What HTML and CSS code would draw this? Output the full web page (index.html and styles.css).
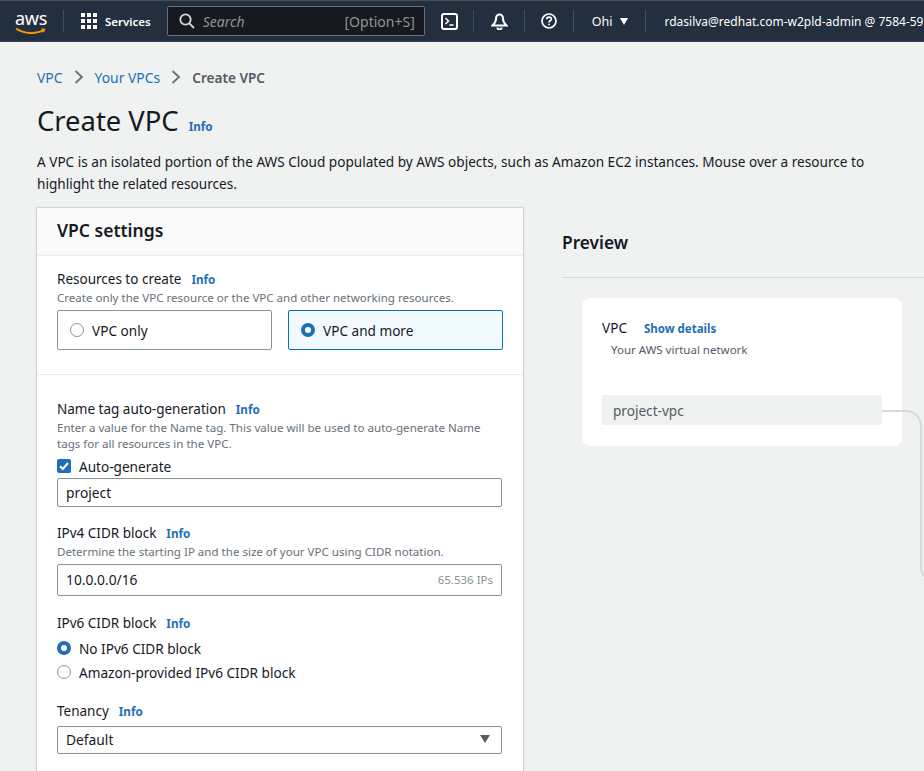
FILE: index.html
```html
<!DOCTYPE html>
<html lang="en">
<head>
    <meta charset="UTF-8">
    <title>Create VPC</title>
    <link rel="stylesheet" href="styles.css">
</head>
<body>

    <!-- Top navigation -->
    <header class="topnav">
        <div class="logo">
            <span class="logo-text">aws</span>
            <svg class="logo-smile" width="32" height="8" viewBox="0 0 32 8">
                <path d="M1 1.5C9 7 21 7.5 29 3" fill="none" stroke="#f90" stroke-width="1.8"/>
                <path d="M26 1.5l4.500 .2-1.600 4z" fill="#f90"/>
            </svg>
        </div>
        <span class="nav-div logo-div"></span>
        <svg class="grid-icon" width="16" height="16" viewBox="0 0 16 16" fill="#fff">
            <rect x="0" y="0" width="4" height="4"/><rect x="6" y="0" width="4" height="4"/><rect x="12" y="0" width="4" height="4"/>
            <rect x="0" y="6" width="4" height="4"/><rect x="6" y="6" width="4" height="4"/><rect x="12" y="6" width="4" height="4"/>
            <rect x="0" y="12" width="4" height="4"/><rect x="6" y="12" width="4" height="4"/><rect x="12" y="12" width="4" height="4"/>
        </svg>
        <span class="nav-services">Services</span>
        <div class="nav-search">
            <svg width="16" height="16" viewBox="0 0 16 16" fill="none" stroke="#d5dbdb" stroke-width="1.800">
                <circle cx="6.500" cy="6.500" r="5.200"/><path d="M10.300 10.300L15 15"/>
            </svg>
            <span class="search-text">Search</span>
            <span class="search-key">[Option+S]</span>
        </div>
        <svg class="shell-icon" width="17" height="17" viewBox="0 0 17 17" fill="none" stroke="#fff" stroke-width="2">
            <rect x="1" y="1" width="15" height="15" rx="2"/>
            <path d="M4.500 5l3 3-3 3M8.500 12h4" stroke-width="1.500"/>
        </svg>
        <span class="nav-div shell-div"></span>
        <svg class="bell-icon" width="17" height="17" viewBox="0 0 17 17" fill="none" stroke="#fff" stroke-width="2">
            <path d="M8.500 1.500C5.800 1.500 5 3.800 5 6c0 3-2 5-3.500 6.500h14C14 11 12 9 12 6c0-2.200-.8-4.500-3.500-4.500z"/>
            <path d="M6.500 14.500a2 2 0 0 0 4 0"/>
        </svg>
        <span class="nav-div bell-div"></span>
        <svg class="help-icon" width="16" height="16" viewBox="0 0 16 16" fill="none" stroke="#fff" stroke-width="1.700">
            <circle cx="8" cy="8" r="7"/>
            <path d="M5.700 6.200C5.800 4.800 6.800 4.200 8 4.200c1.300 0 2.300.8 2.300 1.900 0 1.700-2.300 1.700-2.300 3.500"/>
            <path d="M8 10.800v1.500"/>
        </svg>
        <span class="nav-div help-div"></span>
        <span class="nav-region">Ohi</span>
        <span class="nav-caret"></span>
        <span class="nav-div region-div"></span>
        <span class="nav-user">rdasilva@redhat.com-w2pld-admin @ 7584-59</span>
    </header>

    <main class="content">
        <nav class="crumbs">
            <a href="#">VPC</a>
            <svg width="10" height="14" viewBox="0 0 10 14" fill="none" stroke="#687078" stroke-width="1.800"><path d="M1.500 1l6.500 6-6.500 6"/></svg>
            <a href="#">Your VPCs</a>
            <svg width="10" height="14" viewBox="0 0 10 14" fill="none" stroke="#687078" stroke-width="1.800"><path d="M1.500 1l6.500 6-6.500 6"/></svg>
            <span class="crumb-current">Create VPC</span>
        </nav>

        <div class="title-row">
            <h1>Create VPC</h1>
            <a class="info" href="#">Info</a>
        </div>
        <p class="intro">A VPC is an isolated portion of the AWS Cloud populated by AWS objects, such as Amazon EC2 instances. Mouse over a resource to highlight the related resources.</p>

        <div class="columns">
            <!-- Settings form -->
            <section class="panel">
                <h2 class="panel-head">VPC settings</h2>

                <div class="panel-block first-block">
                    <div class="label-row"><span class="label">Resources to create</span><a class="info" href="#">Info</a></div>
                    <p class="hint">Create only the VPC resource or the VPC and other networking resources.</p>
                    <div class="tiles">
                        <div class="tile"><span class="radio"></span>VPC only</div>
                        <div class="tile tile-on"><span class="radio radio-on"></span>VPC and more</div>
                    </div>
                </div>

                <div class="panel-block second-block">
                    <div class="label-row"><span class="label">Name tag auto-generation</span><a class="info" href="#">Info</a></div>
                    <p class="hint">Enter a value for the Name tag. This value will be used to auto-generate Name tags for all resources in the VPC.</p>
                    <div class="check-row">
                        <span class="checkbox">
                            <svg width="14" height="14" viewBox="0 0 14 14" fill="none" stroke="#fff" stroke-width="2"><path d="M3 7.200l2.800 2.800L11 4"/></svg>
                        </span>
                        Auto-generate
                    </div>
                    <div class="input">project</div>

                    <div class="label-row field-gap"><span class="label">IPv4 CIDR block</span><a class="info" href="#">Info</a></div>
                    <p class="hint">Determine the starting IP and the size of your VPC using CIDR notation.</p>
                    <div class="input input-cidr">10.0.0.0/16<span class="ip-count">65.536 IPs</span></div>

                    <div class="label-row v6-gap"><span class="label">IPv6 CIDR block</span><a class="info" href="#">Info</a></div>
                    <div class="radio-row first-radio"><span class="radio radio-on"></span>No IPv6 CIDR block</div>
                    <div class="radio-row"><span class="radio"></span>Amazon-provided IPv6 CIDR block</div>

                    <div class="label-row tenancy-gap"><span class="label">Tenancy</span><a class="info" href="#">Info</a></div>
                    <div class="input input-select">Default<span class="select-caret"></span></div>
                </div>
            </section>

            <!-- Resource preview -->
            <section class="preview">
                <h2 class="preview-head">Preview</h2>
                <div class="vpc-card">
                    <div class="vpc-top"><span class="vpc-name">VPC</span><a class="details" href="#">Show details</a></div>
                    <p class="vpc-sub">Your AWS virtual network</p>
                    <div class="vpc-chip">project-vpc</div>
                </div>
                <svg class="connector" width="44" height="172" viewBox="0 0 44 172" fill="none" stroke="#d5dbdb" stroke-width="2">
                    <path d="M0 1h24a15 15 0 0 1 15 15v140a15 15 0 0 0 5 12"/>
                </svg>
            </section>
        </div>
    </main>

</body>
</html>
```

FILE: styles.css
```css
* {
    box-sizing: border-box;
}

html, body {
    height: 771px;
    overflow: hidden;
}

body {
    margin: 0;
    background-color: #f0f1f1;
    color: #16191f;
    font-family: "Noto Sans", Arial, sans-serif;
    font-size: 13.600px;
}

a {
    color: #1f6fb5;
    text-decoration: none;
}

h1, h2, p {
    margin: 0;
}

/* Top navigation */
.topnav {
    display: flex;
    align-items: center;
    height: 42px;
    padding-left: 15px;
    background-color: #232f3e;
    border-top: 1px solid #4a4f55;
    border-bottom: 1px solid #3b4552;
    color: #fff;
    white-space: nowrap;
}

.logo {
    position: relative;
    flex: none;
    width: 32px;
    height: 30px;
}

.logo-text {
    position: absolute;
    top: 1px;
    left: 0;
    font-size: 18px;
    line-height: 22px;
    letter-spacing: -0.3px;
}

.logo-smile {
    position: absolute;
    top: 21px;
    left: 0;
}

.nav-div {
    flex: none;
    width: 1px;
    height: 22px;
    background-color: #414d5c;
}

.logo-div { margin-left: 16px; }
.grid-icon { flex: none; margin-left: 17px; }

.nav-services {
    flex: none;
    margin-left: 8px;
    font-size: 11.500px;
    font-weight: 600;
}

.nav-search {
    display: flex;
    flex: none;
    align-items: center;
    width: 258px;
    height: 30px;
    margin-left: 16px;
    padding: 0 9px 0 11px;
    background-color: #16191f;
    border: 1px solid #687078;
    border-radius: 2px;
}

.search-text {
    margin-left: 8px;
    color: #8d9696;
    font-size: 14px;
    font-style: italic;
}

.search-key {
    margin-left: auto;
    color: #8d9696;
    font-size: 14px;
}

.shell-icon { flex: none; margin-left: 16px; }
.shell-div { margin-left: 15px; }
.bell-icon { flex: none; margin-left: 17px; }
.bell-div { margin-left: 16px; }
.help-icon { flex: none; margin-left: 16px; }
.help-div { margin-left: 16px; }

.nav-region {
    flex: none;
    margin-left: 18px;
    font-size: 12.500px;
}

.nav-caret {
    flex: none;
    width: 0;
    height: 0;
    margin-left: 8px;
    border-top: 7px solid #fff;
    border-left: 4.500px solid transparent;
    border-right: 4.500px solid transparent;
}

.region-div { margin-left: 17px; }

.nav-user {
    flex: none;
    margin-left: 18px;
    font-size: 12px;
}

/* Page content */
.content {
    padding: 0 0 0 37px;
}

.crumbs {
    display: flex;
    align-items: center;
    height: 20px;
    margin-top: 25px;
    font-size: 13.900px;
}

.crumbs svg {
    margin: 0 11px 0 11px;
}

.crumb-current {
    color: #545b64;
    font-weight: 600;
    font-size: 13.600px;
}

.title-row {
    display: flex;
    align-items: baseline;
    margin-top: 15px;
}

h1 {
    font-size: 27.400px;
    font-weight: 400;
    line-height: 38px;
}

.info {
    margin-left: 10px;
    font-size: 11.700px;
    font-weight: 700;
}

.intro {
    width: 860px;
    margin-top: 11px;
    line-height: 22px;
}

.columns {
    display: flex;
    align-items: flex-start;
    margin-top: 13px;
}

/* Settings panel */
.panel {
    flex: none;
    width: 486px;
    background-color: #fff;
    box-shadow: 0 0 2px rgba(0, 28, 36, 0.4);
}

.panel-head {
    height: 48px;
    padding: 9px 20px 0;
    background-color: #fafafa;
    border-bottom: 1px solid #eaeded;
    font-size: 17.500px;
    font-weight: 600;
    line-height: 26px;
}

.panel-block {
    padding: 0 20px;
}

.first-block {
    height: 119px;
    padding-top: 13px;
    border-bottom: 1px solid #eaeded;
}

.second-block {
    height: 400px;
    padding-top: 24px;
}

.label-row {
    display: flex;
    align-items: baseline;
    height: 20px;
    line-height: 20px;
}

.label {
    font-size: 13.500px;
}

.hint {
    margin-top: 1px;
    color: #687078;
    font-size: 11.550px;
    line-height: 16px;
}

.tiles {
    display: flex;
    gap: 16px;
    margin-top: 4px;
}

.tile {
    display: flex;
    align-items: center;
    width: 215px;
    height: 40px;
    padding-left: 12px;
    background-color: #fff;
    border: 1px solid #879596;
    border-radius: 2px;
}

.tile-on {
    background-color: #f1faff;
    border-color: #0073bb;
}

.radio {
    flex: none;
    width: 14px;
    height: 14px;
    margin-right: 8px;
    background-color: #fff;
    border: 1px solid #879596;
    border-radius: 50%;
}

.radio-on {
    border: 4px solid #1f6fb5;
}

.check-row {
    display: flex;
    align-items: center;
    height: 20px;
    margin-top: 4px;
}

.checkbox {
    display: flex;
    flex: none;
    width: 14px;
    height: 14px;
    margin-right: 8px;
    background-color: #1f6fb5;
    border-radius: 2px;
}

.input {
    display: flex;
    align-items: center;
    width: 445px;
    height: 29px;
    margin-top: 2px;
    padding: 0 8px;
    background-color: #fff;
    border: 1px solid #879596;
    border-radius: 2px;
    font-size: 13.800px;
}

.input-cidr {
    height: 32px;
    margin-top: 4px;
    padding-bottom: 2px;
}

.ip-count {
    margin-left: auto;
    color: #879596;
    font-size: 11.500px;
}

.field-gap { margin-top: 16px; }
.v6-gap { margin-top: 17px; }
.tenancy-gap { margin-top: 17px; }

.radio-row {
    display: flex;
    align-items: center;
    height: 24px;
}

.first-radio {
    margin-top: 3px;
}

.input-select {
    height: 28px;
    margin-top: 5px;
    padding-bottom: 2px;
}

.select-caret {
    width: 0;
    height: 0;
    margin-left: auto;
    margin-right: 3px;
    border-top: 8px solid #545b64;
    border-left: 5.500px solid transparent;
    border-right: 5.500px solid transparent;
}

/* Preview */
.preview {
    position: relative;
    flex: none;
    width: 400px;
    margin-left: 39px;
}

.preview-head {
    height: 70px;
    padding-top: 22px;
    border-bottom: 1px solid #d5dbdb;
    font-size: 17.300px;
    font-weight: 600;
    line-height: 26px;
}

.vpc-card {
    width: 320px;
    height: 148px;
    margin: 20px 0 0 20px;
    padding: 20px 20px 0;
    background-color: #fff;
    border-radius: 8px;
}

.vpc-top {
    display: flex;
    align-items: baseline;
    line-height: 20px;
}

.details {
    margin-left: 17px;
    font-size: 11.500px;
    font-weight: 700;
}

.vpc-sub {
    margin: 3px 0 0 9px;
    color: #545b64;
    font-size: 11.500px;
    line-height: 16px;
}

.vpc-chip {
    display: flex;
    align-items: center;
    width: 280px;
    height: 30px;
    margin-top: 37px;
    padding-left: 11px;
    background-color: #f0f1f1;
    border-radius: 1px;
    color: #545b64;
}

/* sits on top of the card, runs from the chip down the right edge */
.connector {
    position: absolute;
    top: 202px;
    left: 320px;
}
```
